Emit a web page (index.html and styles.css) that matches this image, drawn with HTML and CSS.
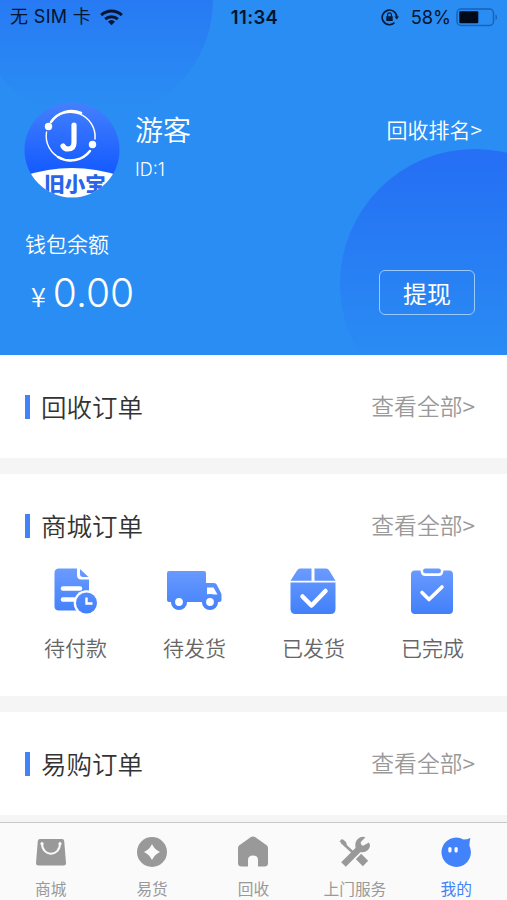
FILE: index.html
```html
<!DOCTYPE html>
<html lang="zh-CN">
<head>
<meta charset="utf-8">
<meta name="viewport" content="width=device-width">
<title>我的</title>
<link rel="stylesheet" href="styles.css">
</head>
<body>
<div class="app">
  <header class="hero">
    <div class="orb orb-left"></div>
    <div class="orb orb-right"></div>
    <div class="status">
      <div class="carrier"><span>无 SIM 卡</span>
        <svg width="23" height="17" viewBox="0 0 23 17" fill="none" stroke="#03152e" stroke-width="3"><path d="M1.2 6.2a15 15 0 0 1 20.6 0M5.2 10.1a9.5 9.5 0 0 1 12.6 0"/><path d="M11.5 16.2 8 12.7a5.2 5.2 0 0 1 7 0z" fill="#03152e" stroke="none"/></svg>
      </div>
      <div class="clock">11:34</div>
      <div class="power">
        <svg width="18" height="17" viewBox="0 0 18 17" fill="none" stroke="#041a38" stroke-width="1.6"><path d="M15.8 8a7.3 7.3 0 1 0-2.3 5.7"/><path d="m13.4 7.4 2.4 3 2.2-3z" fill="#041a38" stroke="none"/><rect x="5.3" y="7.2" width="6.4" height="4.8" fill="#041a38" stroke="none"/><path d="M6.6 7.5V5.8a1.9 1.9 0 0 1 3.8 0v1.7" stroke-width="1.2"/></svg>
        <span>58%</span>
        <svg width="43" height="19" viewBox="0 0 43 19"><rect x="1" y="1" width="36.5" height="16.5" rx="4" fill="none" stroke="#1b62b2" stroke-width="1.5"/><rect x="3.3" y="3.3" width="19" height="12" rx="1" fill="#000a18"/><path d="M39.5 6.3c2 .8 2 5.1 0 5.9z" fill="#1b62b2"/></svg>
      </div>
    </div>
    <div class="profile">
      <svg class="avatar" width="96" height="96" viewBox="0 0 96 96">
        <defs>
          <linearGradient id="av" x1="0" y1="0" x2="0" y2="1"><stop offset="0" stop-color="#4580fc"/><stop offset=".7" stop-color="#165cff"/></linearGradient>
          <clipPath id="round"><circle cx="48" cy="48" r="47.5"/></clipPath>
        </defs>
        <g clip-path="url(#round)">
          <rect width="96" height="96" fill="url(#av)"/>
          <path d="M0 74Q48 58 96 74V96H0z" fill="#fff"/>
          <text class="brand" x="51" y="90" text-anchor="middle">旧小宝</text>
        </g>
        <g fill="none" stroke="#fff" stroke-linecap="round">
          <path d="M27 20A24.5 24.5 0 0 1 71 37" stroke-width="1.5"/><path d="M27 20A24.5 24.5 0 0 1 57 11" stroke-width="2.5"/>
          <path d="M22.5 30A24.5 24.5 0 0 0 66 49" stroke-width="1.4"/><path d="M34 55A24.5 24.5 0 0 0 66 49" stroke-width="2.5"/>
          <path d="M50 23V40.500Q50 47 44 47Q40.500 47 39 44" stroke-width="5.200"/>
        </g>
        <circle cx="24.500" cy="24.500" r="3.700" fill="#fff"/><circle cx="68.500" cy="42.500" r="3.700" fill="#fff"/>
      </svg>
      <div class="who"><div class="name">游客</div><div class="uid">ID:1</div></div>
      <a class="rank">回收排名&gt;</a>
    </div>
    <div class="wallet">
      <div><div class="wallet-label">钱包余额</div><div class="amount"><span class="yen">¥</span>0.00</div></div>
      <button class="withdraw">提现</button>
    </div>
  </header>

  <main>
    <section class="card">
      <div class="card-head"><h2>回收订单</h2><a>查看全部&gt;</a></div>
    </section>
    <section class="card mall">
      <div class="card-head"><h2>商城订单</h2><a>查看全部&gt;</a></div>
      <div class="orders">
        <div class="order">
          <svg width="56" height="52" viewBox="0 0 56 52">
            <defs><linearGradient id="bl" gradientUnits="userSpaceOnUse" x1="0" y1="2" x2="0" y2="48"><stop offset="0" stop-color="#6b9bff"/><stop offset="1" stop-color="#4180fa"/></linearGradient></defs>
            <path d="M12 2.500H30V9Q30 13.500 34.500 13.500H42V44.500H12Q7.500 44.500 7.500 40V7Q7.500 2.500 12 2.500z" fill="url(#bl)"/><path d="M33 3 41.500 11H36Q33 11 33 8z" fill="url(#bl)"/>
            <path d="M16 22.500H33M16 33.500H27" stroke="#fff" stroke-width="4.600" stroke-linecap="round"/>
            <circle cx="39.500" cy="37" r="12.800" fill="#fff"/><circle cx="39.500" cy="37" r="10.500" fill="url(#bl)"/><path d="M39.500 31.500V37.500H45.500" fill="none" stroke="#fff" stroke-width="2.400"/>
          </svg><span>待付款</span>
        </div>
        <div class="order">
          <svg width="56" height="52" viewBox="0 0 56 52">
            <path d="M3 5H38Q40 5 40 7V17H48Q50 17 51 19L55.500 28V34Q55.500 36 53 36H3Q1 36 1 34V7Q1 5 3 5z" fill="url(#bl)"/>
            <path d="M41 21.500H47.500L51.500 28.500H41z" fill="#fff"/>
            <g fill="#fff" stroke="url(#bl)" stroke-width="4.200"><circle cx="13" cy="36" r="6"/><circle cx="44" cy="36" r="6"/></g>
          </svg><span>待发货</span>
        </div>
        <div class="order">
          <svg width="56" height="52" viewBox="0 0 56 52">
            <path d="M15 2.500H26.500V14.800H5.500L12 4.500Q13.300 2.500 15 2.500zM29.500 2.500H41Q43 2.500 44.200 4.500L50.500 14.800H29.500z" fill="url(#bl)"/><path d="M5.500 16.600H50.500V43Q50.500 48 45.500 48H10.500Q5.500 48 5.500 43z" fill="url(#bl)"/>
            <path d="M17.500 30.500 26.500 39.500 40.500 25" fill="none" stroke="#fff" stroke-width="4.500" stroke-linecap="round" stroke-linejoin="round"/>
          </svg><span>已发货</span>
        </div>
        <div class="order">
          <svg width="56" height="52" viewBox="0 0 56 52">
            <path d="M11 4.500H16.500Q17 10 21 10H35Q39 10 39.500 4.500H45Q49 4.500 49 8.500V44Q49 48 45 48H11Q7 48 7 44V8.500Q7 4.500 11 4.500z" fill="url(#bl)"/><rect x="19" y="2.500" width="18" height="4.800" rx="2.400" fill="url(#bl)"/>
            <path d="M18 26.500 25 33.500 38 21" fill="none" stroke="#fff" stroke-width="3.600" stroke-linecap="round" stroke-linejoin="round"/>
          </svg><span>已完成</span>
        </div>
      </div>
    </section>
    <section class="card">
      <div class="card-head"><h2>易购订单</h2><a>查看全部&gt;</a></div>
    </section>
  </main>

  <nav class="tabs">
    <a class="tab"><svg width="34" height="34" viewBox="0 0 34 34" fill="currentColor"><path d="M6 4H28Q30 4 30.200 6L32 28Q32 30.500 29.500 30.500H4.500Q2 30.500 2 28L3.800 6Q4 4 6 4z"/><path d="M8 8.500C8 22 26 22 26 8.500" fill="none" stroke="#fafafa" stroke-width="2"/><circle cx="8" cy="8.700" r="1.600" fill="#fafafa"/><circle cx="26" cy="8.700" r="1.600" fill="#fafafa"/></svg><span>商城</span></a>
    <a class="tab"><svg width="34" height="34" viewBox="0 0 34 34" fill="currentColor"><circle cx="17" cy="17" r="15"/><path d="M17 9Q19.500 14.500 25 17Q19.500 19.500 17 25Q14.500 19.500 9 17Q14.500 14.500 17 9z" fill="#fafafa"/></svg><span>易货</span></a>
    <a class="tab"><svg width="34" height="34" viewBox="0 0 34 34" fill="currentColor"><path d="M15 2Q17 .8 19 2L31 10.500Q32 11.500 32 13V28Q32 31.500 28.500 31.500H22V25Q22 20.500 17 20.500Q12 20.500 12 25V31.500H5.500Q2 31.500 2 28V13Q2 11.500 3 10.500z"/></svg><span>回收</span></a>
    <a class="tab"><svg width="34" height="34" viewBox="0 0 34 34" fill="none" stroke="currentColor"><path d="M3.500 7 16 18.500" stroke-width="2.600"/><path d="M1.500 6.500 3.500 4.300Q4 4 5 4.500L8 7 9 10 6 9.500z" fill="currentColor" stroke="none"/><path d="M20.500 21.500 27.500 28.500" stroke-width="7.500" /><path d="M5.500 29.500 21 14" stroke-width="6.500"/><path d="M28.200 3.500A6.800 6.800 0 1 0 31.200 9.500" stroke="none"/><path d="M27.500 2.200 22.800 6.900Q22.300 9.600 25.100 10.700L30.900 7.500Q33.500 11 30 15Q26 18.800 21 16.500L17.500 12.500Q16.500 7 20 3.700Q23.500 .7 27.500 2.200z" fill="currentColor" stroke="none"/></svg><span>上门服务</span></a>
    <a class="tab active"><svg width="34" height="34" viewBox="0 0 34 34" fill="currentColor"><path d="M17 2.500Q21 2.500 24.500 4.500Q28 4.500 31.500 3Q30.500 6 30.300 10.500A14.700 14.700 0 1 1 17 2.500z"/><g fill="#fff"><rect x="9.300" y="12" width="3.200" height="5.500" rx="1.600"/><rect x="15.500" y="12" width="3.200" height="5.500" rx="1.600"/></g></svg><span>我的</span></a>
  </nav>
</div>
</body>
</html>
```
FILE: styles.css
```css
* { box-sizing: border-box; }
body { margin: 0; font-family: "Noto Sans CJK SC", sans-serif; font-weight: 350; color: #333; }
svg { display: block; flex: none; }
.app { width: 507px; height: 900px; display: flex; flex-direction: column; overflow: hidden; background: #f5f5f5; }

.hero { position: relative; height: 355px; flex: none; overflow: hidden; background: #2a8df3; color: #fff; }
.orb { position: absolute; border-radius: 50%; }
.orb-left { left: -27px; top: -120px; width: 240px; height: 240px; background: linear-gradient(#277af3 50%, #2a8df3 94%); }
.orb-right { left: 340px; top: 149px; width: 270px; height: 270px; background: linear-gradient(#2570f4 5%, #2a8df3 80%); }
.status, .profile, .wallet { position: relative; display: flex; }
.status { height: 34px; padding: 0 8px 0 10px; align-items: center; justify-content: space-between; font: 400 17.5px/34px Inter, "Noto Sans CJK SC", sans-serif; color: #03152e; }
.carrier, .power { display: flex; align-items: center; flex: 1; }
.carrier { gap: 9px; }
.carrier span { font-size: 18px; letter-spacing: .35px; }
.power { justify-content: flex-end; }
.power span { margin: 0 5px 0 12px; font-size: 18.3px; }
.clock { font-weight: 600; font-size: 18.5px; letter-spacing: .4px; line-height: 36px; }

.profile { height: 96px; margin: 68px 25px 0 24px; }
.who { margin-left: 15px; }
.name { font-size: 28px; line-height: 38px; margin-top: 8px; }
.uid { font: 300 18px/24px Inter, sans-serif; margin-top: 10px; }
.rank { margin: 12px 0 0 auto; font-size: 21px; line-height: 30px; }
.brand { font: 900 20.5px "Noto Sans CJK SC", sans-serif; fill: #2865ec; }
.wallet { margin: 30px 32px 0 25px; justify-content: space-between; }
.wallet-label { font-size: 21px; line-height: 30px; }
.amount { font: 300 39px/46px Inter, sans-serif; margin-top: 12px; display: flex; align-items: baseline; }
.yen { font: 350 27px/30px "Noto Sans CJK SC", sans-serif; margin: 0 7px 0 6px; }
.withdraw { width: 96px; height: 45px; margin-top: 42px; padding: 0; background: none; border: 1px solid #9acbff; border-radius: 6px; color: #fff; font: 400 24px/40px "Noto Sans CJK SC", sans-serif; }

main { flex: 1; min-height: 0; overflow: hidden; }
.card { height: 103px; margin-bottom: 16px; padding: 34px 32px 0 25px; background: #fff; }
.mall { height: 222px; }
.card-head { display: flex; align-items: center; justify-content: space-between; height: 36px; }
.card-head h2 { margin: 0; display: flex; align-items: center; font-size: 25.500px; font-weight: 350; line-height: 34px; height: 36px; padding-bottom: 2px; }
.card-head h2::before { content: ""; width: 5px; height: 24px; margin: 2px 11px 0 0; background: #4283f8; }
.card-head a { font-size: 22.800px; line-height: 34px; padding-bottom: 2px; color: #999; }
.orders { display: grid; grid-template-columns: repeat(4, 119px); margin: 22px 0 0 -9px; }
.order { display: flex; flex-direction: column; align-items: center; color: #666; font-size: 21px; line-height: 30px; }
.order svg { margin-right: 2px; }
.order span { margin-top: 14px; }

.tabs { flex: none; height: 78px; display: grid; grid-template-columns: repeat(5, 1fr); background: #fafafa; border-top: 1px solid #c8c8c8; }
.tab { display: flex; flex-direction: column; align-items: center; color: #999; font-size: 15.700px; font-weight: 400; line-height: 22px; padding-top: 12px; }
.tab span { margin-top: 9px; }
.tab.active { color: #4283fb; }
```
